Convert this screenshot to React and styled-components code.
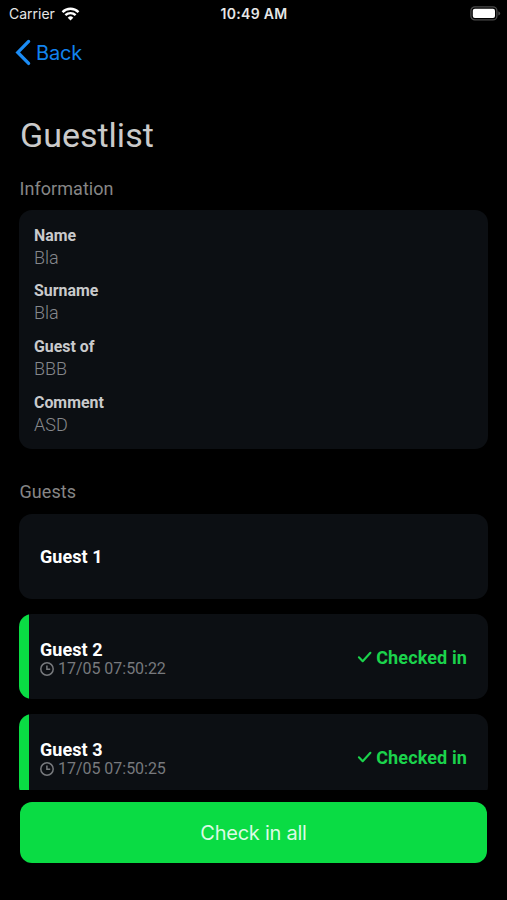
import React from 'react';
import styled, { createGlobalStyle } from 'styled-components';

const GlobalStyle = createGlobalStyle`
    * {
        box-sizing: border-box;
    }
    body {
        margin: 0;
        background: #000;
        font-family: Roboto, sans-serif;
    }
`

const Screen = styled.div`
    display: flex;
    flex-direction: column;
    height: 900px;
    overflow: hidden;
    background: #000;
`
const StatusBar = styled.header`
    display: grid;
    grid-template-columns: 1fr auto 1fr;
    align-items: center;
    height: 27px;
    padding: 0 6px 0 9px;
    font-family: Inter, sans-serif;
    font-size: 14px;
    color: #e6e6e6;
`
const Carrier = styled.div`
    display: flex;
    align-items: center;
    gap: 6px;
`
const Clock = styled.div`
    font-weight: 600;
    font-size: 14px;
    letter-spacing: 0.3px;
    margin-right: 2px;
`
const BatteryIcon = styled.svg`
    justify-self: end;
`
const BackButton = styled.button`
    display: flex;
    align-items: center;
    align-self: flex-start;
    gap: 5px;
    height: 50px;
    padding: 1px 0 0 15px;
    border: 0;
    background: none;
    color: #1283ee;
    font-family: Inter, sans-serif;
    font-size: 20px;
    letter-spacing: -0.2px;
`
const Content = styled.main`
    height: 713px;
    padding: 34px 19px 0;
    overflow: hidden;
`
const Title = styled.h1`
    margin: 0 1px;
    padding-bottom: 2px;
    font-size: 34px;
    font-weight: 400;
    line-height: 48px;
    color: #cacaca;
`
const SectionTitle = styled.h2`
    margin: ${({ $top }) => $top}px 0 9px 0.5px;
    font-size: 18px;
    font-weight: 400;
    line-height: 24px;
    letter-spacing: 0.05px;
    color: #868686;
`
const Card = styled.section`
    border-radius: 13px;
    background: #0c0f13;
`
const InfoCard = styled(Card)`
    display: flex;
    flex-direction: column;
    gap: 12px;
    height: 239px;
    padding: 15.5px 15px;
`
const Label = styled.div`
    font-size: 15.9px;
    font-weight: 700;
    line-height: 20px;
    color: #c9cacc;
`
const Value = styled.div`
    font-size: 18px;
    font-weight: 300;
    line-height: 23.7px;
    color: #86888c;
`
const GuestList = styled.div`
    display: flex;
    flex-direction: column;
    gap: 15px;
    padding-top: 1px;
`
const GuestCard = styled(Card)`
    display: flex;
    align-items: center;
    justify-content: space-between;
    height: 85px;
    padding: 0 21px;
    background: ${({ $checked }) => $checked
        ? 'linear-gradient(to right, #0adc44 10px, #0c0f13 10px)'
        : '#0c0f13'};
`
const GuestName = styled.div`
    font-size: 18px;
    font-weight: 700;
    line-height: 20px;
    letter-spacing: 0.05px;
    color: #fff;
`
const GuestDetails = styled.div`
    padding-top: ${({ $checked }) => $checked ? 4.5 : 1}px;
`
const CheckTime = styled.div`
    display: flex;
    align-items: center;
    gap: 4px;
    font-size: 16px;
    line-height: 18px;
    letter-spacing: -0.03px;
    color: #77797d;
`
const CheckedIn = styled.div`
    display: flex;
    align-items: center;
    gap: 4px;
    padding-top: 1px;
    font-size: 18px;
    font-weight: 700;
    letter-spacing: 0.12px;
    color: #1bd34c;
`
const CheckAllButton = styled.button`
    height: 61px;
    margin: 12px 20px 0;
    border: 0;
    border-radius: 12px;
    background: #0adc44;
    color: #dcfbe4;
    font-family: Inter, sans-serif;
    font-size: 20px;
    letter-spacing: -0.25px;
`

const info = [
    { label: 'Name', value: 'Bla' },
    { label: 'Surname', value: 'Bla' },
    { label: 'Guest of', value: 'BBB' },
    { label: 'Comment', value: 'ASD' },
]

const guests = [
    { name: 'Guest 1' },
    { name: 'Guest 2', time: '17/05 07:50:22' },
    { name: 'Guest 3', time: '17/05 07:50:25' },
]

const Wifi = () => (
    <svg width="19" height="14" viewBox="0 0 18 14" fill="none" stroke="#fff" strokeWidth="2.4">
        <path d="M1 5.1A11.4 11.4 0 0 1 17 5.1" />
        <path d="M3.9 8.2A7.2 7.2 0 0 1 14.1 8.2" />
        <path d="M9 13.6L6.2 10.7A4 4 0 0 1 11.8 10.7Z" fill="#fff" stroke="none" />
    </svg>
)

const Battery = () => (
    <BatteryIcon width="31" height="15" viewBox="0 0 31 15">
        <rect x="0.9" y="0.9" width="26" height="13" rx="4" fill="none" stroke="#4b4b4b" strokeWidth="1.3" />
        <rect x="2.8" y="2.8" width="22.2" height="9.2" rx="2" fill="#fff" />
        <path d="M28.3 5.2Q30.2 6 30.2 7.4T28.3 9.6Z" fill="#4b4b4b" />
    </BatteryIcon>
)

const Chevron = () => (
    <svg width="16" height="27" viewBox="0 0 16 27" fill="none" stroke="#1b8cf5" strokeWidth="3.3" strokeLinecap="round" strokeLinejoin="miter">
        <path d="M13.6 2.4L2.8 13.4L13.6 24.4" />
    </svg>
)

const ClockIcon = () => (
    <svg width="14" height="14" viewBox="0 0 14 14" fill="none" stroke="#77797d" strokeWidth="1.5">
        <circle cx="7" cy="7" r="6.2" />
        <path d="M6.9 3.6V7.2H10.2" />
    </svg>
)

const Check = () => (
    <svg width="15" height="12" viewBox="0 0 15 12" fill="none" stroke="#1bd34c" strokeWidth="2.1" strokeLinecap="round" strokeLinejoin="round">
        <path d="M1.9 6.3L5.7 10.2L13.4 1.8" />
    </svg>
)

const Guest = ({ name, time }) => (
    <GuestCard $checked={Boolean(time)}>
        <GuestDetails $checked={Boolean(time)}>
            <GuestName>{name}</GuestName>
            {time && <CheckTime><ClockIcon />{time}</CheckTime>}
        </GuestDetails>
        {time && <CheckedIn><Check />Checked in</CheckedIn>}
    </GuestCard>
)

const App = () => {
    return (
    <>
        <GlobalStyle />
        <Screen>
            <StatusBar>
                <Carrier>Carrier <Wifi /></Carrier>
                <Clock>10:49 AM</Clock>
                <Battery />
            </StatusBar>
            <BackButton><Chevron />Back</BackButton>
            <Content>
                <Title>Guestlist</Title>
                <SectionTitle $top={16}>Information</SectionTitle>
                <InfoCard>
                    {info.map(({ label, value }) => (
                        <div key={label}>
                            <Label>{label}</Label>
                            <Value>{value}</Value>
                        </div>
                    ))}
                </InfoCard>
                <SectionTitle $top={31.3}>Guests</SectionTitle>
                <GuestList>
                    {guests.map((guest) => <Guest key={guest.name} {...guest} />)}
                </GuestList>
            </Content>
            <CheckAllButton>Check in all</CheckAllButton>
        </Screen>
    </>)
}

export default App;
